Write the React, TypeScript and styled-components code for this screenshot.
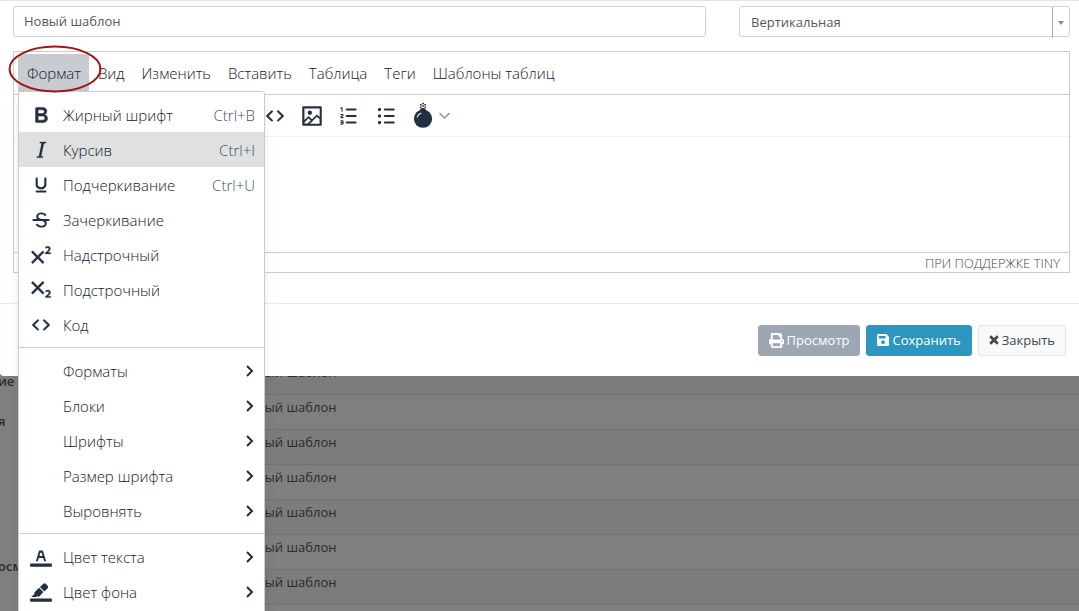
import React from "react";
import styled, { createGlobalStyle } from "styled-components";
import { FaPrint } from "react-icons/fa";

const GlobalStyle = createGlobalStyle`
  *, *::before, *::after { box-sizing: border-box; }
  html, body { margin: 0; height: 100%; }
  #root { height: 100%; }
  body { background: #7f7f7f; font-family: "Open Sans", sans-serif; font-size: 13px; color: #55595c; }
  button, input, select { font: inherit; color: inherit; }
`;

const Page = styled.div`
  height: 100vh;
  display: flex;
  flex-direction: column;
  overflow: hidden;
`;

const Dialog = styled.form`
  position: relative;
  z-index: 1;
  flex: none;
  background: #fff;
  border-top: 1px solid #e5e5e5;
  border-bottom-left-radius: 4px;
`;

const DialogBody = styled.div`
  padding: 5px 9px 30px 13px;
  border-bottom: 1px solid #e9e9ea;
`;

const FieldRow = styled.div`
  display: grid;
  grid-template-columns: 693fr 331fr;
  gap: 33px;
  margin-bottom: 14px;
`;

const TextField = styled.input`
  height: 31px;
  min-width: 0;
  padding: 0 10px 2px;
  border: 1px solid #cfd2d6;
  border-radius: 3px;
  background: #fff;
`;

const SelectWrap = styled.div`
  position: relative;
  height: 31px;
`;

const SelectField = styled.select`
  appearance: none;
  width: 100%;
  height: 31px;
  padding: 0 11px;
  border: 1px solid #cfd2d6;
  border-radius: 3px;
  background: #fff;
`;

const SelectArrow = styled.span`
  position: absolute;
  top: 1px;
  right: 1px;
  width: 17px;
  height: 31px;
  display: flex;
  align-items: center;
  justify-content: center;
  border-left: 1px solid #aaa;
  pointer-events: none;
  &::after {
    content: "";
    border: 3px solid transparent;
    border-top: 4px solid #888;
    border-bottom: 0;
  }
`;

const Editor = styled.section`
  border: 1px solid #ccc;
  font-size: 15px;
  font-weight: 300;
  color: #15202d;
`;

const MenuBar = styled.nav`
  position: relative;
  display: flex;
  align-items: flex-start;
  height: 43px;
  padding: 2px 4px 0;
  border-bottom: 1px solid #ccc;
`;

const MenuBarButton = styled.button<{ $open?: boolean }>`
  height: 39px;
  padding: 0 8px 2px 9px;
  border: 0;
  border-radius: 3px;
  white-space: nowrap;
  background: ${(p) => (p.$open ? "#c8cbcf" : "transparent")};
`;

const Highlight = styled.svg`
  position: absolute;
  z-index: 3;
  top: -8px;
  left: -7px;
  pointer-events: none;
`;

const ToolBar = styled.div`
  display: flex;
  align-items: center;
  height: 42px;
  padding-left: 248px;
  border-bottom: 1px solid #f2f2f2;
`;

const ToolButton = styled.button<{ $wide?: boolean }>`
  width: ${(p) => (p.$wide ? "52px" : "37px")};
  height: 34px;
  padding: 0;
  display: flex;
  align-items: center;
  border: 0;
  background: none;
`;

const EditArea = styled.div`
  height: 115px;
`;

const StatusBar = styled.footer`
  display: flex;
  justify-content: flex-end;
  align-items: center;
  height: 20px;
  padding: 0 9px;
  border-top: 1px solid #ccc;
  font-size: 13px;
  color: #3f4956;
`;

const DialogFooter = styled.div`
  display: flex;
  justify-content: flex-end;
  gap: 6px;
  padding: 21px 13px 20px;
`;

const ActionButton = styled.button<{ $bg: string; $fg: string; $line: string }>`
  display: flex;
  align-items: center;
  gap: 3px;
  height: 31px;
  padding: 0 10px 1px;
  border: 1px solid ${(p) => p.$line};
  border-radius: 3px;
  background: ${(p) => p.$bg};
  color: ${(p) => p.$fg};
  white-space: nowrap;
`;

const Menu = styled.div`
  position: absolute;
  z-index: 2;
  top: 39px;
  left: 4px;
  width: 247px;
  border: 1px solid #ccc;
  border-radius: 3px;
  background: #fff;
  box-shadow: 0 4px 8px rgba(34, 47, 62, 0.1);
`;

const MenuGroup = styled.div`
  padding: 5px 0;
  & + & { border-top: 1px solid #ccc; }
`;

const MenuItem = styled.button<{ $active?: boolean }>`
  width: 100%;
  height: 35px;
  display: grid;
  grid-template-columns: 26px 1fr auto;
  column-gap: 9px;
  align-items: center;
  padding: 0 9px;
  border: 0;
  text-align: left;
  background: ${(p) => (p.$active ? "#dee0e2" : "#fff")};
`;

const Shortcut = styled.span`
  color: #46505c;
`;

const Backdrop = styled.main`
  flex: 1;
  min-height: 0;
  display: grid;
  grid-template-columns: 18px 1fr;
  overflow: hidden;
  color: #2b2b2b;
`;

const SideNav = styled.aside`
  overflow: hidden;
  margin-top: -5px;
  font-weight: 600;
  line-height: 20px;
  white-space: nowrap;
`;

const SideText = styled.p<{ $space: number }>`
  margin: 0 0 ${(p) => p.$space}px -2px;
`;

const RowsTable = styled.table`
  width: 100%;
  margin-top: -17px;
  border-collapse: collapse;
  align-self: start;
`;

const Row = styled.tr`
  height: 35px;
  border-bottom: 1px solid #727272;
  &:nth-child(odd) { background: #7c7c7c; }
`;

const Cell = styled.td`
  padding: 0 0 9px 222px;
`;

type IconName =
  | "bold" | "italic" | "underline" | "strike" | "sup" | "sub" | "code"
  | "color" | "marker" | "image" | "ol" | "ul" | "bomb";

const paths: Record<IconName, React.ReactNode> = {
  bold: <path fillRule="evenodd" stroke="currentColor" strokeWidth=".5" d="M7.8 19c-.3 0-.5 0-.6-.2l-.2-.5V5.7c0-.2 0-.4.2-.5l.6-.2h5c1.5 0 2.7.3 3.5 1 .7.6 1.1 1.4 1.1 2.5a3 3 0 0 1-.6 1.9c-.4.6-1 1-1.6 1.2.4.1.9.3 1.3.6s.8.7 1 1.2c.4.4.5 1 .5 1.6 0 1.3-.4 2.3-1.3 3-.8.7-2.1 1-3.8 1H7.8Zm5-8.3c.6 0 1.2-.1 1.6-.5.4-.3.6-.7.6-1.3 0-1.1-.8-1.7-2.3-1.7H9.3v3.5h3.4Zm.5 6c.7 0 1.3-.1 1.7-.4.4-.4.6-.9.6-1.5s-.2-1-.7-1.4c-.4-.3-1-.4-2-.4H9.4v3.8h4Z" />,
  italic: <path fillRule="evenodd" stroke="currentColor" strokeWidth=".3" d="m16.7 4.7-.1.9h-.3c-.6 0-1 0-1.4.3-.3.3-.4.6-.5 1.1l-2.1 9.8v.6c0 .5.4.8 1.4.8h.2l-.2.8H8l.2-.8h.2c1.1 0 1.8-.5 2-1.5l2-9.8.1-.5c0-.6-.4-.8-1.4-.8h-.3l.2-.9h5.8Z" />,
  underline: <path fillRule="evenodd" d="M16 5c.6 0 1 .4 1 1v5.5a4 4 0 0 1-.4 1.8l-1 1.4a5.3 5.3 0 0 1-5.5 1 5 5 0 0 1-1.6-1c-.5-.4-.8-.9-1.1-1.4a4 4 0 0 1-.4-1.800V6c0-.6.4-1 1-1s1 .4 1 1v5.5c0 .3 0 .6.2 1l.6.7a3.3 3.3 0 0 0 2.2.8 3.4 3.4 0 0 0 2.2-.8c.3-.2.4-.5.6-.8l.2-.9V6c0-.6.4-1 1-1ZM8 17h8c.6 0 1 .4 1 1s-.4 1-1 1H8a1 1 0 0 1 0-2Z" />,
  strike: (
    <>
      <path fillRule="evenodd" d="M15.600 8.500c-.5-.7-1-1.100-1.300-1.300-.6-.4-1.300-.6-2-.6-2.700 0-2.800 1.700-2.800 2.100 0 1.600 1.800 2 3.200 2.300 4.400.9 4.600 2.800 4.600 3.900 0 1.400-.7 4.100-5 4.100A6.200 6.200 0 0 1 7 16.400l1.500-1.100c.4.6 1.600 2 3.700 2 1.600 0 2.500-.4 3-1.200.4-.8.3-2-.8-2.600-.7-.4-1.600-.7-2.900-1-1-.2-3.900-.8-3.900-3.600C7.600 6 10.300 5 12.400 5c2.900 0 4.200 1.600 4.700 2.400l-1.500 1.100Z" />
      <path d="M5 11h14a1 1 0 0 1 0 2H5a1 1 0 0 1 0-2Z" />
    </>
  ),
  sup: <path fillRule="evenodd" stroke="currentColor" strokeWidth=".3" d="M15 9.4 10.4 14l4.6 4.6-1.4 1.4L9 15.4 4.4 20 3 18.6 7.6 14 3 9.4 4.4 8 9 12.6 13.6 8 15 9.4Zm5.9 1.6h-5v-1l1-.8 1.7-1.6c.3-.5.5-.9.5-1.3 0-.3 0-.5-.2-.7-.2-.2-.5-.3-.9-.3l-.8.2-.7.4-.4-1.2c.2-.2.5-.4 1-.5.3-.2.8-.2 1.2-.2.8 0 1.4.2 1.8.6.4.4.6 1 .6 1.6 0 .5-.2 1-.5 1.5l-1.3 1.4-.6.5h2.6V11Z" />,
  sub: <path fillRule="evenodd" stroke="currentColor" strokeWidth=".3" d="m10.4 10 4.6 4.6-1.4 1.4L9 11.4 4.4 16 3 14.6 7.6 10 3 5.4 4.4 4 9 8.6 13.6 4 15 5.4 10.4 10ZM21 19h-5v-1l1-.8 1.7-1.6c.3-.4.5-.8.5-1.2 0-.3 0-.6-.2-.7-.2-.2-.5-.3-.9-.3a2 2 0 0 0-.8.2l-.7.3-.4-1.1 1-.6 1.2-.2c.8 0 1.4.3 1.8.7.4.4.6.9.6 1.5s-.2 1.1-.5 1.6a8 8 0 0 1-1.3 1.3l-.6.6h2.6V19Z" />,
  code: <path fillRule="evenodd" stroke="currentColor" strokeWidth=".3" d="M9.8 15.7c.3.3.3.8 0 1-.3.4-.9.4-1.2 0l-4.4-4.1a.8.8 0 0 1 0-1.2l4.4-4.2c.3-.3.9-.3 1.2 0 .3.3.3.8 0 1.1L6 12l3.8 3.700ZM14.2 15.7c-.3.3-.3.8 0 1 .4.4.9.4 1.2 0l4.4-4.1c.3-.3.3-.9 0-1.2l-4.400-4.2a.8.8 0 0 0-1.2 0c-.3.3-.3.8 0 1.1L18 12l-3.8 3.7Z" />,
  color: <path fillRule="evenodd" d="M2 18h20v3H2zM8.7 16h-.8a.5.5 0 0 1-.5-.6l2.7-9c.1-.3.3-.4.5-.4h2.8c.2 0 .4.1.5.4l2.7 9a.5.5 0 0 1-.5.6h-.8a.5.5 0 0 1-.4-.4l-.7-2.2c0-.3-.3-.4-.5-.4h-3.4c-.2 0-.4.1-.5.4l-.7 2.2c0 .3-.2.4-.4.4Zm2.6-7.6-.6 2a.5.5 0 0 0 .5.6h1.6a.5.5 0 0 0 .5-.6l-.6-2c0-.3-.3-.4-.5-.4h-.4c-.2 0-.4.1-.5.4Z" />,
  marker: <path fillRule="evenodd" d="M2 18h20v3H2zM7.7 16.7H3l3.3-3.3-.7-.8L10.2 8l4 4.1-4 4.2c-.2.2-.6.2-.8 0l-.6-.7-1.1 1.1zm5-7.5L11 7.4l3-2.9a2 2 0 0 1 2.6 0L18 6c.7.7.7 2 0 2.7l-2.9 2.9-1.8-1.8-.5-.6" />,
  image: <path fillRule="evenodd" d="m5 15.7 3.3-3.2c.3-.3.7-.3 1 0L12 15l4.1-4c.3-.4.8-.4 1 0l2 1.9V5H5v10.7ZM5 18V19h3l2.8-2.9-2-2L5 17.9Zm14-3-2.5-2.4-6.4 6.5H19v-4ZM4 3h16c.6 0 1 .4 1 1v16c0 .6-.4 1-1 1H4a1 1 0 0 1-1-1V4c0-.6.4-1 1-1Zm6 8a2 2 0 1 0 0-4 2 2 0 0 0 0 4Z" />,
  ol: <path fillRule="evenodd" d="M10 17h8c.6 0 1 .4 1 1s-.4 1-1 1h-8a1 1 0 0 1 0-2Zm0-6h8c.6 0 1 .4 1 1s-.4 1-1 1h-8a1 1 0 0 1 0-2Zm0-6h8c.6 0 1 .4 1 1s-.4 1-1 1h-8a1 1 0 1 1 0-2ZM6 4v3.5c0 .3-.2.5-.5.5a.5.5 0 0 1-.5-.5V5h-.5a.5.5 0 0 1 0-1H6Zm-1 8.8.2.2h1.3c.3 0 .5.2.5.5s-.2.5-.5.5H4.9a1 1 0 0 1-.9-1V13c0-.4.3-.8.6-1l1.2-.4.2-.3a.2.2 0 0 0-.2-.2H4.5a.5.5 0 0 1-.5-.5c0-.3.2-.5.5-.5h1.6c.5 0 .9.4.9 1v.1c0 .4-.3.8-.6 1l-1.2.4-.2.3ZM7 17v2c0 .6-.4 1-1 1H4.5a.5.5 0 0 1 0-1h1.2c.2 0 .3-.1.3-.3 0-.2-.1-.3-.3-.3H4.4a.4.4 0 1 1 0-.8h1.3c.2 0 .3-.1.3-.3 0-.2-.1-.3-.3-.3H4.5a.5.5 0 1 1 0-1H6c.6 0 1 .4 1 1Z" />,
  ul: <path fillRule="evenodd" d="M11 5h8c.6 0 1 .4 1 1s-.4 1-1 1h-8a1 1 0 0 1 0-2Zm0 6h8c.6 0 1 .4 1 1s-.4 1-1 1h-8a1 1 0 0 1 0-2Zm0 6h8c.6 0 1 .4 1 1s-.4 1-1 1h-8a1 1 0 0 1 0-2ZM4.5 6c0-.4.1-.8.4-1 .3-.4.7-.5 1.1-.5.4 0 .8.1 1 .4.4.3.5.7.5 1.1 0 .4-.1.8-.4 1-.3.4-.7.5-1.1.5-.4 0-.8-.1-1-.4-.4-.3-.5-.7-.5-1.1Zm0 6c0-.4.1-.8.4-1 .3-.4.7-.5 1.1-.5.4 0 .8.1 1 .4.4.3.5.7.5 1.1 0 .4-.1.8-.4 1-.3.4-.7.5-1.1.5-.4 0-.8-.1-1-.4-.4-.3-.5-.7-.5-1.1Zm0 6c0-.4.1-.8.4-1 .3-.4.7-.5 1.1-.5.4 0 .8.1 1 .4.4.3.5.7.5 1.1 0 .4-.1.8-.4 1-.3.4-.7.5-1.1.5-.4 0-.8-.1-1-.4-.4-.3-.5-.7-.5-1.1Z" />,
  bomb: (
    <>
      <circle cx="12" cy="14.500" r="8.400" />
      <path d="M9.500 7.500v-2l1.500-1h2l1.500 1v2Z" />
      <path d="M6.700 13a5.500 5.500 0 0 1 3.400-3.600" fill="none" stroke="#fff" strokeWidth="1" strokeLinecap="round" />
      <path d="M11.200-.3h1.600v1.500h-1.600ZM9.300.9h1.500v1.500H9.300ZM13.200.9h1.500v1.500h-1.500ZM11.200 2h1.600v1.500h-1.600ZM9.300 3.200h1.300v1.300H9.300ZM13.400 3.200h1.300v1.300h-1.300Z" />
    </>
  ),
};

const Icon = ({ name }: { name: IconName }) => (
  <svg width="26" height="26" viewBox="0 0 24 24" fill="#222f3e" color="#222f3e" overflow="visible" aria-hidden="true">
    {paths[name]}
  </svg>
);

const Chevron = () => (
  <svg width="10" height="12" viewBox="0 0 10 12" fill="none" stroke="#222f3e" strokeWidth="2" aria-hidden="true">
    <path d="m2 1 5 5-5 5" />
  </svg>
);

const SaveIcon = () => (
  <svg width="12" height="12" viewBox="0 0 12 12" fill="currentColor" aria-hidden="true">
    <path fillRule="evenodd" d="M1.300 0h8L12 2.700v8c0 .7-.6 1.300-1.300 1.300H1.300C.6 12 0 11.400 0 10.700V1.300C0 .6.6 0 1.300 0ZM2 2v2.600h6.500V2H2Zm4 4.300a1.900 1.900 0 1 0 0 3.800 1.900 1.900 0 0 0 0-3.800Z" />
  </svg>
);

const CloseIcon = () => (
  <svg width="10" height="10" viewBox="0 0 10 10" fill="none" stroke="currentColor" strokeWidth="2.800" aria-hidden="true">
    <path d="m1.200 1.200 7.600 7.600M8.800 1.200 1.200 8.800" />
  </svg>
);

type Entry = { label: string; icon?: IconName; keys?: string; active?: boolean; sub?: boolean };

const groups: Entry[][] = [
  [
    { label: "Жирный шрифт", icon: "bold", keys: "Ctrl+B" },
    { label: "Курсив", icon: "italic", keys: "Ctrl+I", active: true },
    { label: "Подчеркивание", icon: "underline", keys: "Ctrl+U" },
    { label: "Зачеркивание", icon: "strike" },
    { label: "Надстрочный", icon: "sup" },
    { label: "Подстрочный", icon: "sub" },
    { label: "Код", icon: "code" },
  ],
  [
    { label: "Форматы", sub: true },
    { label: "Блоки", sub: true },
    { label: "Шрифты", sub: true },
    { label: "Размер шрифта", sub: true },
    { label: "Выровнять", sub: true },
  ],
  [
    { label: "Цвет текста", icon: "color", sub: true },
    { label: "Цвет фона", icon: "marker", sub: true },
  ],
];

const menus = ["Формат", "Вид", "Изменить", "Вставить", "Таблица", "Теги", "Шаблоны таблиц"];
const tools: IconName[] = ["code", "image", "ol", "ul"];
const toolLabels = ["Код", "Изображение", "Нумерованный список", "Маркированный список"];

export default function App() {
  return (
    <Page>
      <GlobalStyle />
      <Dialog onSubmit={(e) => e.preventDefault()}>
        <DialogBody>
          <FieldRow>
            <TextField aria-label="Название" defaultValue="Новый шаблон" />
            <SelectWrap>
              <SelectField aria-label="Ориентация">
                <option>Вертикальная</option>
              </SelectField>
              <SelectArrow />
            </SelectWrap>
          </FieldRow>
          <Editor>
            <MenuBar>
              {menus.map((m, i) => (
                <MenuBarButton key={m} type="button" $open={i === 0}>{m}</MenuBarButton>
              ))}
              <Menu role="menu">
                {groups.map((group, g) => (
                  <MenuGroup key={g}>
                    {group.map((item) => (
                      <MenuItem key={item.label} type="button" role="menuitem" $active={item.active}>
                        {item.icon ? <Icon name={item.icon} /> : <span />}
                        <span>{item.label}</span>
                        {item.keys && <Shortcut>{item.keys}</Shortcut>}
                        {item.sub && <Chevron />}
                      </MenuItem>
                    ))}
                  </MenuGroup>
                ))}
              </Menu>
              <Highlight width="96" height="50" viewBox="0 0 96 50" fill="none" aria-hidden="true">
                <ellipse cx="48" cy="25" rx="45.500" ry="22.500" stroke="#a31515" strokeWidth="2" />
              </Highlight>
            </MenuBar>
            <ToolBar>
              {tools.map((t, i) => (
                <ToolButton key={t} type="button" aria-label={toolLabels[i]}><Icon name={t} /></ToolButton>
              ))}
              <ToolButton type="button" aria-label="Вставка" $wide>
                <Icon name="bomb" />
                <svg width="18" height="10" viewBox="0 0 18 10" fill="none" stroke="#8e959d" strokeWidth="1.500" aria-hidden="true">
                  <path d="m3.500 2 5 5 5-5" />
                </svg>
              </ToolButton>
            </ToolBar>
            <EditArea />
            <StatusBar>ПРИ ПОДДЕРЖКЕ TINY</StatusBar>
          </Editor>
        </DialogBody>
        <DialogFooter>
          <ActionButton type="button" $bg="#9da7b3" $line="#9da7b3" $fg="#fff">
            <FaPrint size={15} />Просмотр
          </ActionButton>
          <ActionButton type="submit" $bg="#2b97c0" $line="#2b97c0" $fg="#fff">
            <SaveIcon />Сохранить
          </ActionButton>
          <ActionButton type="button" $bg="#f8f9fb" $line="#e4e6e8" $fg="#44484c">
            <CloseIcon />Закрыть
          </ActionButton>
        </DialogFooter>
      </Dialog>
      <Backdrop>
        <SideNav>
          <SideText $space={20}>ие</SideText>
          <SideText $space={125}>я</SideText>
          <SideText $space={0}>осм</SideText>
        </SideNav>
        <RowsTable>
          <tbody>
            {Array.from({ length: 8 }, (_, i) => (
              <Row key={i}><Cell>Новый шаблон</Cell></Row>
            ))}
          </tbody>
        </RowsTable>
      </Backdrop>
    </Page>
  );
}
